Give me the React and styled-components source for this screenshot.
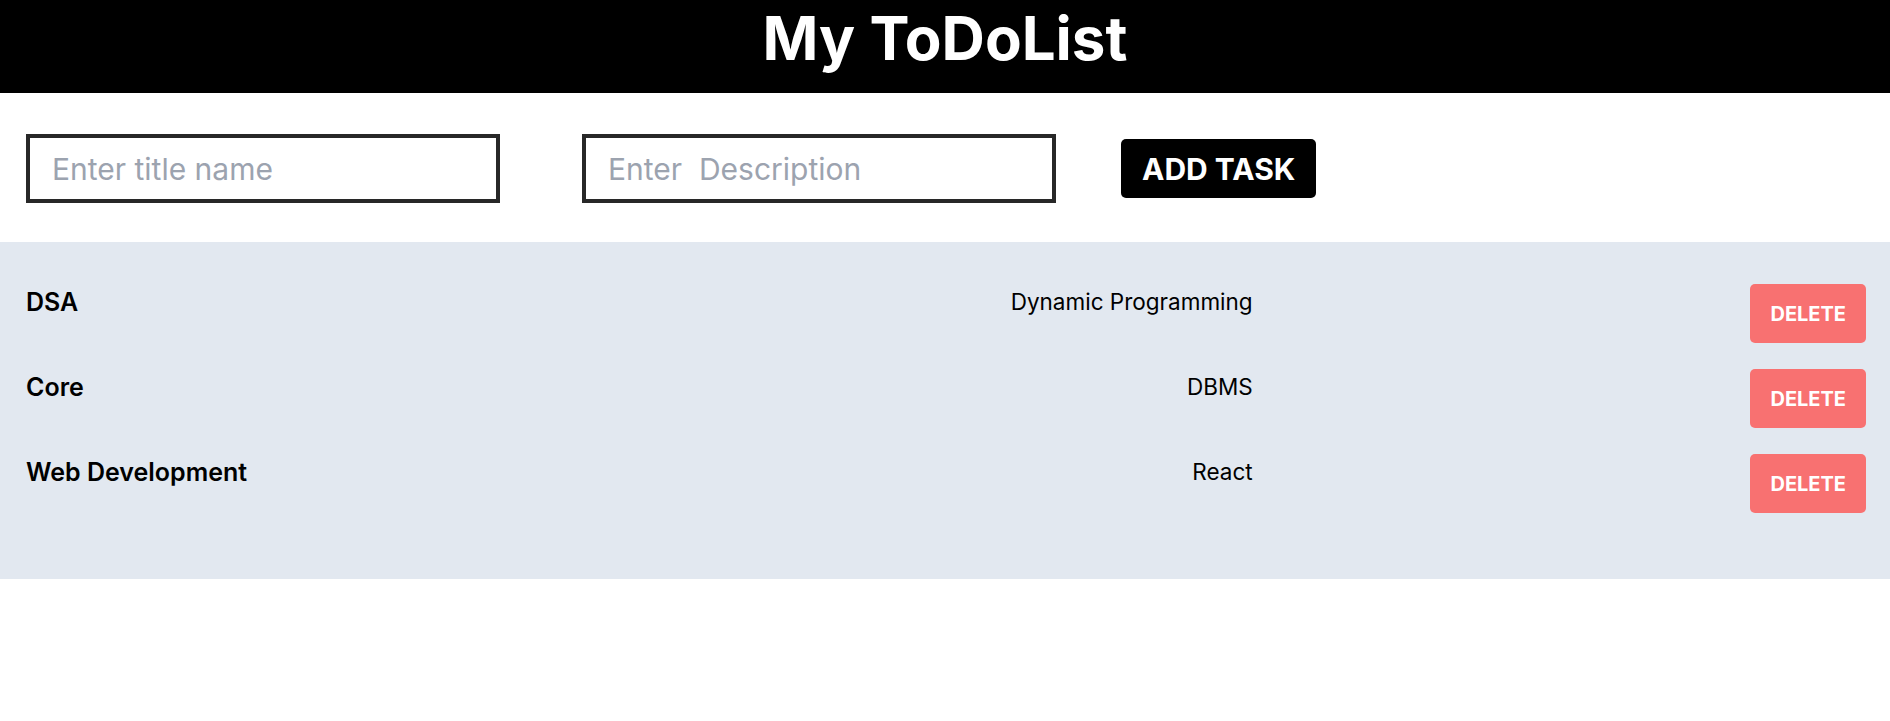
import React from 'react';
import styled, { createGlobalStyle } from 'styled-components';

const GlobalStyle = createGlobalStyle`
    body {
        margin: 0;
        font-family: Inter, "Noto Sans", sans-serif;
        background: #fff;
        color: #000;
    }
`;

const Header = styled.header`
    background: #000;
    height: 93px;
    box-sizing: border-box;
    padding-top: 8px;
    text-align: center;
`;

const Title = styled.h1`
    margin: 0;
    color: #fff;
    font-size: 60px;
    line-height: 60px;
    font-weight: 700;
`;

const Form = styled.div`
    display: flex;
    align-items: center;
    padding: 41px 26px 39px;
`;

const Input = styled.input`
    width: 474px;
    height: 69px;
    box-sizing: border-box;
    border: 4px solid #282828;
    padding: 0 22px;
    margin-right: ${(p) => p.$space}px;
    font-family: Inter, sans-serif;
    font-size: 30px;
    outline: none;

    &::placeholder {
        color: #9ca3af;
    }
`;

const AddButton = styled.button`
    height: 59px;
    padding: 0 21px;
    background: #000;
    color: #fff;
    border: none;
    border-radius: 5px;
    font-family: Inter, sans-serif;
    font-size: 30px;
    font-weight: 700;
    cursor: pointer;
`;

const List = styled.div`
    background: #e2e8f0;
    padding: 42px 24px 66px 26px;
    display: flex;
    flex-direction: column;
    gap: 26px;
`;

const Row = styled.div`
    display: grid;
    grid-template-columns: repeat(3, 1fr);
    align-items: start;
`;

const TaskTitle = styled.h5`
    margin: 0;
    font-size: 25px;
    line-height: 36px;
    font-weight: 600;
`;

const TaskDesc = styled.p`
    margin: 0;
    justify-self: end;
    font-size: 22.5px;
    line-height: 36px;
    font-weight: 400;
`;

const DeleteButton = styled.button`
    justify-self: end;
    height: 59px;
    padding: 0 20px;
    background: #f87171;
    color: #fff;
    border: none;
    border-radius: 5px;
    font-family: Inter, sans-serif;
    font-size: 20px;
    font-weight: 700;
    cursor: pointer;
`;

const tasks = [
    { title: 'DSA', desc: 'Dynamic Programming' },
    { title: 'Core', desc: 'DBMS' },
    { title: 'Web Development', desc: 'React' },
];

const App = () => {
    return (
        <>
            <GlobalStyle />
            <Header>
                <Title>My ToDoList</Title>
            </Header>
            <Form>
                <Input $space={82} placeholder="Enter title name" />
                <Input $space={65} placeholder="Enter  Description" />
                <AddButton>ADD TASK</AddButton>
            </Form>
            <List>
                {tasks.map((t) => (
                    <Row key={t.title}>
                        <TaskTitle>{t.title}</TaskTitle>
                        <TaskDesc>{t.desc}</TaskDesc>
                        <DeleteButton>DELETE</DeleteButton>
                    </Row>
                ))}
            </List>
        </>
    );
};

export default App;
